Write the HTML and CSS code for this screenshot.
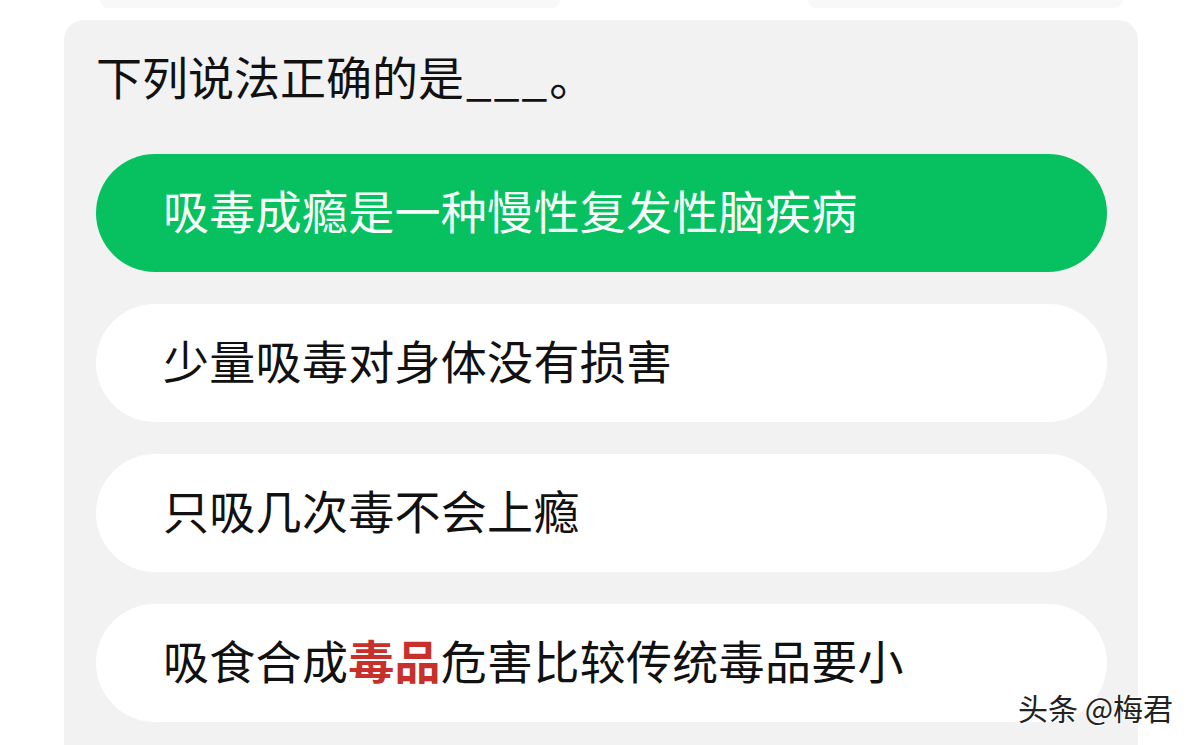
FILE: index.html
```html
<!DOCTYPE html>
<html lang="zh-CN">
<head>
<meta charset="utf-8">
<link rel="stylesheet" href="styles.css">
</head>
<body>
<div class="top-strip">
  <div class="ghost ghost-a"></div>
  <div class="ghost ghost-b"></div>
</div>
<div class="card">
  <div class="question">下列说法正确的是<span class="blank">___</span>。</div>
  <div class="options">
    <div class="option selected">吸毒成瘾是一种慢性复发性脑疾病</div>
    <div class="option">少量吸毒对身体没有损害</div>
    <div class="option">只吸几次毒不会上瘾</div>
    <div class="option">吸食合成<span class="hl">毒品</span>危害比较传统毒品要小</div>
  </div>
</div>
<div class="watermark">头条 @梅君</div>
</body>
</html>
```
FILE: styles.css
```css
html, body {
  margin: 0;
  padding: 0;
  background: #ffffff;
  width: 1200px;
  height: 745px;
  overflow: hidden;
  font-family: "Noto Sans CJK SC", "Noto Sans", sans-serif;
}
.top-strip {
  height: 8px;
  display: flex;
  padding-left: 100px;
  gap: 248px;
}
.ghost {
  height: 8px;
  background: #f8f8f8;
  border-radius: 0 0 10px 10px;
}
.ghost-a { width: 460px; }
.ghost-b { width: 315px; }
.card {
  margin: 12px 0 0 64px;
  width: 1074px;
  height: 760px;
  box-sizing: border-box;
  background: #f2f2f2;
  border-radius: 20px;
  padding: 27px 31px 0 32px;
}
.question {
  font-size: 46px;
  line-height: 56px;
  color: #111111;
  height: 107px;
}
.blank {
  letter-spacing: 2px;
  margin-left: 2px;
}
.options {
  display: flex;
  flex-direction: column;
  gap: 32px;
}
.option {
  height: 118px;
  box-sizing: border-box;
  padding-bottom: 9px;
  border-radius: 59px;
  background: #ffffff;
  display: flex;
  align-items: center;
  padding-left: 67px;
  font-size: 46px;
  letter-spacing: 0.3px;
  color: #111111;
}
.option.selected {
  background: #07c160;
  color: #f6fff9;
}
.hl {
  color: #c8302c;
  font-weight: 700;
}
.watermark {
  position: absolute;
  left: 1018px;
  top: 687px;
  font-size: 30px;
  line-height: 40px;
  color: #222222;
  text-shadow: 1px 1px 1px #ffffff, -1px -1px 1px #ffffff;
}
```
